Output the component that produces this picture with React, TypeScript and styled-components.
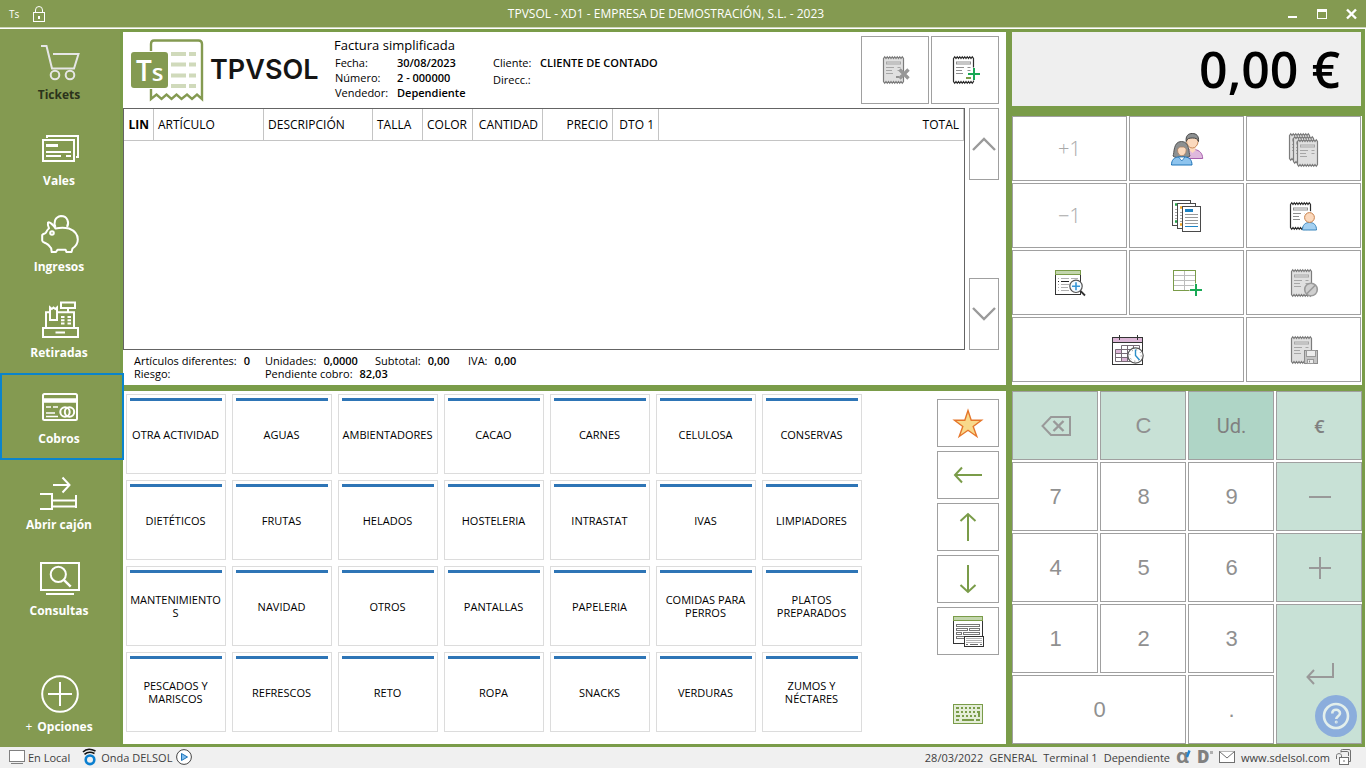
import React from "react";
import styled, { createGlobalStyle, css } from "styled-components";

const color = {
  olive: "#849a51",
  frame: "#7a9c49",
  line: "#a0a0a0",
  mint: "#c8e1d6",
  mintDark: "#afd5c6",
  blue: "#2e75b6",
  select: "#0a84cc",
};

const GlobalStyle = createGlobalStyle`
  * { box-sizing: border-box; }
  body { margin: 0; background: #f0f0f0; }
  button { font: inherit; color: inherit; margin: 0; padding: 0; cursor: pointer; }
  svg { display: block; overflow: visible; }
  dl, dd, dt, h1, p { margin: 0; font-weight: inherit; font-size: inherit; }
`;

const Shell = styled.div`
  min-height: 100vh;
  display: grid;
  grid-template-rows: 29px minmax(0, 1fr) 21px;
  font-family: "Open Sans", "Noto Sans", sans-serif;
  font-size: 11px;
  color: #000;
`;

/* ---------- title bar ---------- */

const TitleBar = styled.header`
  display: grid;
  grid-template-columns: 1fr auto 1fr;
  align-items: center;
  padding: 0 9px;
  background: ${color.olive};
  color: #fff;
  border-bottom: 1px solid #fff;
  box-shadow: inset 0 -1px 0 #ced6ba;
`;

const TitleLeft = styled.div`
  display: flex;
  align-items: center;
  gap: 12px;
`;

const TitleText = styled.span`
  padding-right: 34px;
  font-size: 12px;
  line-height: 16px;
`;

const AppBadge = styled.span`
  width: 12px;
  font-size: 10px;
  line-height: 14px;
`;

const WindowControls = styled.div`
  display: flex;
  justify-content: flex-end;
  gap: 18px;
`;

const WindowButton = styled.button`
  width: 11px;
  height: 12px;
  border: 0;
  background: none;
`;

/* ---------- sidebar ---------- */

const Body = styled.div`
  display: grid;
  grid-template-columns: 120px minmax(0, 1fr);
`;

const Sidebar = styled.nav`
  display: flex;
  flex-direction: column;
  background: ${color.olive};
`;

const NavItem = styled.button<{ $selected?: boolean; $current?: boolean; $last?: boolean }>`
  position: relative;
  display: flex;
  flex-direction: column;
  align-items: center;
  gap: 5px;
  height: 86px;
  padding-top: 13px;
  border: 0;
  background: none;
  color: ${(p) => (p.$current ? "#2b331b" : "#fff")};
  font-size: 12px;
  font-weight: 700;
  line-height: 16px;
  ${(p) => p.$last && "margin-top: auto;"}
  ${(p) =>
    p.$selected &&
    css`
      &::after {
        content: "";
        position: absolute;
        inset: 0 -4px -1px 0;
        border: 2px solid ${color.select};
      }
    `}
`;

const NavLabel = styled.span`
  padding-right: 2px;
`;

const NavPlus = styled.span`
  font-weight: 400;
  margin-right: 5px;
`;

/* ---------- workspace ---------- */

const Workspace = styled.main`
  display: grid;
  grid-template-columns: minmax(0, 1fr) 350px;
  grid-template-rows: repeat(2, minmax(353px, 1fr));
  gap: 6px;
  padding: 3px;
  background: ${color.frame};
  border-right: 1px solid #fff;
`;

const TicketPanel = styled.section`
  display: grid;
  grid-template-rows: 76px minmax(0, 1fr) 35px;
  background: #fff;
`;

const TicketHeader = styled.div`
  display: flex;
  padding: 0 7px 0 8px;
`;

const Brand = styled.div`
  display: flex;
  align-items: center;
  gap: 7px;
  width: 203px;
`;

const BrandName = styled.span`
  font-family: Inter, sans-serif;
  font-size: 27px;
  font-weight: 600;
  line-height: 32px;
  color: #151515;
`;

const TicketInfo = styled.div`
  display: grid;
  grid-template-columns: 158px auto;
  align-content: start;
  flex: 1;
  padding-top: 4px;
`;

const TicketTitle = styled.h1`
  grid-column: 1 / -1;
  font-size: 13px;
  font-weight: 500;
  line-height: 19px;
`;

const Fields = styled.dl<{ $label: number; $rowGap?: number }>`
  display: grid;
  grid-template-columns: ${(p) => p.$label}px auto;
  row-gap: ${(p) => p.$rowGap || 0}px;
  align-content: start;
  line-height: 15px;
  dt { padding-left: 1px; }
  dd { font-weight: 600; }
`;

const HeaderActions = styled.div`
  display: flex;
  gap: 2px;
  padding-top: 4px;
`;

const boxButton = css`
  display: flex;
  align-items: center;
  justify-content: center;
  border: 1px solid ${color.line};
  background: #fff;
`;

const HeaderButton = styled.button`
  ${boxButton}
  width: 68px;
  height: 68px;
`;

const LinesArea = styled.div`
  display: flex;
  gap: 4px;
  padding-right: 7px;
`;

const LinesFrame = styled.div`
  flex: 1;
  border: 1px solid #646464;
`;

const LinesTable = styled.table`
  width: 100%;
  table-layout: fixed;
  border-collapse: separate;
  border-spacing: 0;
`;

const Th = styled.th<{ $end?: boolean; $strong?: boolean; $width?: number }>`
  width: ${(p) => (p.$width ? `${p.$width}px` : "auto")};
  height: 32px;
  padding: 0 4px;
  border-right: 1px solid #c4c4c4;
  border-bottom: 1px solid #c4c4c4;
  font-size: 12px;
  font-weight: ${(p) => (p.$strong ? 700 : 400)};
  text-align: ${(p) => (p.$end ? "right" : "left")};
  white-space: nowrap;
`;

const ScrollColumn = styled.div`
  display: flex;
  flex-direction: column;
  justify-content: space-between;
`;

const ScrollButton = styled.button`
  ${boxButton}
  width: 30px;
  height: 72px;
`;

const Totals = styled.dl`
  display: grid;
  grid-template-columns: 131px 110px 93px auto;
  grid-auto-rows: 13px;
  padding: 4px 0 0 11px;
  line-height: 13px;
`;

const Total = styled.div<{ $span?: boolean }>`
  display: flex;
  gap: 7px;
  ${(p) => p.$span && "grid-column: span 2;"}
  dd { font-weight: 600; }
`;

/* ---------- families ---------- */

const CatalogPanel = styled.section`
  display: flex;
  background: #fff;
`;

const Tiles = styled.div`
  flex: 1;
  display: grid;
  grid-template-columns: repeat(auto-fill, 100px);
  grid-auto-rows: 80px;
  gap: 6px;
  padding: 3px;
`;

const Tile = styled.button`
  display: flex;
  flex-direction: column;
  border: 1px solid #dcdcdc;
  background: #fff;
  padding: 3px 2px 6px;
  line-height: 13px;
  &::before {
    content: "";
    align-self: stretch;
    height: 3px;
    margin: 0 1px;
    background: ${color.blue};
  }
`;

const TileLabel = styled.span`
  flex: 1;
  display: flex;
  align-items: center;
  justify-content: center;
  width: 93px;
  text-align: center;
  overflow-wrap: anywhere;
`;

const SideTools = styled.div`
  display: flex;
  flex-direction: column;
  align-items: center;
  gap: 4px;
  padding: 8px 7px 0 0;
`;

const ToolButton = styled.button`
  ${boxButton}
  width: 62px;
  height: 48px;
`;

const KeyboardButton = styled.button`
  margin-top: 45px;
  border: 0;
  background: none;
`;

/* ---------- right column ---------- */

const RightTop = styled.section`
  display: grid;
  grid-template-rows: 74px minmax(0, 1fr);
  row-gap: 10px;
`;

const AmountDisplay = styled.output`
  display: flex;
  align-items: center;
  justify-content: flex-end;
  margin-right: 1px;
  padding-right: 21px;
  background: #efefef;
  font-size: 50px;
  font-weight: 600;
  line-height: 74px;
`;

const Functions = styled.div`
  display: grid;
  grid-template-columns: repeat(3, minmax(0, 1fr));
  grid-template-rows: repeat(4, minmax(0, 1fr));
  gap: 2px;
  padding: 0 1px 3px 0;
  background: #fff;
`;

const FunctionButton = styled.button<{ $wide?: boolean }>`
  ${boxButton}
  grid-column: span ${(p) => (p.$wide ? 2 : 1)};
  font-size: 20px;
  font-weight: 300;
  color: #a8a8a8;
`;

const Keypad = styled.section`
  display: grid;
  grid-template-columns: repeat(4, minmax(0, 1fr));
  grid-template-rows: repeat(5, minmax(0, 1fr));
  gap: 2px;
  background: #fff;
`;

const Key = styled.button<{ $tone?: "mint" | "dark"; $wide?: boolean; $tall?: boolean }>`
  ${boxButton}
  grid-column: span ${(p) => (p.$wide ? 2 : 1)};
  grid-row: span ${(p) => (p.$tall ? 2 : 1)};
  padding-left: 1px;
  background: ${(p) => (p.$tone === "dark" ? color.mintDark : p.$tone === "mint" ? color.mint : "#fff")};
  font-family: "Liberation Sans", sans-serif;
  font-size: 22px;
  color: #909090;
`;

const KeyWord = styled.span`
  font-family: Roboto, sans-serif;
  font-size: 20px;
  color: #808080;
`;

const KeyCurrency = styled.span`
  font-family: "Open Sans", sans-serif;
  font-size: 18px;
  font-weight: 600;
  color: #808080;
`;

const HelpButton = styled.button`
  position: fixed;
  right: 9px;
  bottom: 31px;
  width: 42px;
  height: 42px;
  border: 0;
  border-radius: 50%;
  background: #8baddc;
`;

/* ---------- status bar ---------- */

const StatusBar = styled.footer`
  display: flex;
  align-items: center;
  justify-content: space-between;
  padding: 0 15px 1px 9px;
  background: #f0f0f0;
  color: #404040;
`;

const StatusGroup = styled.div<{ $gap: number }>`
  display: flex;
  align-items: center;
  gap: ${(p) => p.$gap}px;
`;

const StatusItem = styled.span<{ $gap: number }>`
  display: flex;
  align-items: center;
  gap: ${(p) => p.$gap}px;
`;

const StatusLink = styled.a`
  color: inherit;
  text-decoration: none;
`;

/* ---------- icons ---------- */

const Lock = () => (
  <svg width="12" height="16" viewBox="0 0 12 16" fill="none" stroke="#fff">
    <rect x=".5" y="6.500" width="11" height="9" />
    <path d="M2.500 6V4a3.500 3.500 0 0 1 7 0v2" />
    <path d="M6 10v3" strokeWidth="2" />
  </svg>
);

const NavSvg = ({ children, stroke = "#fff" }: { children: React.ReactNode; stroke?: string }) => (
  <svg width="40" height="40" viewBox="0 0 40 40" fill="none" stroke={stroke} strokeWidth="2">
    {children}
  </svg>
);

const CartIcon = () => (
  <NavSvg stroke="#e6e6e6">
    <path d="M1 4H6.500L12 26.500H34L38.500 12H13" />
    <circle cx="15" cy="33" r="4.300" />
    <circle cx="30" cy="33" r="4.300" />
  </NavSvg>
);

const VouchersIcon = () => (
  <NavSvg>
    <rect x="3" y="12" width="31" height="21" />
    <path d="M7 10V8H38V29H36" />
    <path d="M6 17.500H18" strokeWidth="3" />
    <path d="M6 24H31M6 28H21M26 28H31" strokeWidth="1.800" />
  </NavSvg>
);

const PiggyIcon = () => (
  <NavSvg>
    <path
      strokeLinejoin="round"
      d="M8 8.500C9.500 7.500 13 10.500 15.500 14.500C20 13.500 25 13.500 29 14.500C34 16.500 37.800 20.500 37.800 25.500C37.800 29 35.500 32.500 32.500 34.500L31.500 38H26.500L25.500 35.700H17.500L16 38H11.700L11.200 34.300C9.800 33 9 31 7 30C5 28.500 2.200 28.500 2.200 26.500V21C3 19.500 5 20 6 18.500C6.800 17 7.500 15.500 9 14.300C8 12.500 7.500 10.500 8 8.500Z"
    />
    <path d="M15.500 13C13.500 9 14.500 3 21 2C27.500 2 29.500 8.500 27 13" />
    <circle cx="12" cy="19" r="1.800" />
  </NavSvg>
);

const RegisterIcon = () => (
  <NavSvg>
    <rect x="21" y="2.500" width="14" height="5.500" />
    <path d="M28 8V12M17.500 12.300H34V27M9 12.300H6V27" />
    <rect x="3" y="28" width="35" height="9" />
    <path d="M15.500 32.500H25M10 20H17V7.500L15.300 9L13.500 7.500L11.800 9L10 7.500Z" />
    <path d="M21 17H24.500M27.500 17H31M21 20.200H24.500M27.500 20.200H31M21 23.400H24.500M27.500 23.400H31" />
  </NavSvg>
);

const CardIcon = () => (
  <NavSvg>
    <rect x="3" y="8" width="34" height="26" rx="1.500" />
    <path d="M3 14.500H37" strokeWidth="4.500" />
    <path d="M6 21H11M13 21H18M6 27H15M6 30.500H18" strokeWidth="1.600" />
    <circle cx="25" cy="26" r="4.700" />
    <circle cx="29.500" cy="26" r="4.700" />
  </NavSvg>
);

const DrawerIcon = () => (
  <NavSvg>
    <path d="M13 13H29M22.500 5.500L29.500 13L22.500 20.500" />
    <path d="M0 22H12V37H0M12 28.500H36M12 34.500H36M36 23V36" />
  </NavSvg>
);

const SearchScreenIcon = () => (
  <NavSvg>
    <rect x="1" y="5" width="38" height="27" />
    <path d="M6 36H34" />
    <circle cx="18.300" cy="16.300" r="7.600" />
    <path d="M23.800 21.800L30.700 28.700" strokeWidth="2.400" />
  </NavSvg>
);

const MoreIcon = () => (
  <NavSvg>
    <circle cx="20" cy="20" r="17.800" />
    <path d="M8 20H32M20 8V32" />
  </NavSvg>
);

const BrandLogo = () => (
  <svg width="72" height="62" viewBox="0 0 72 62" fill="none">
    <path
      d="M20 12V5Q20 1.500 23 1.500H67.500Q71 1.500 71 5V60L66 55.500L61 60L56 55.500L50.500 60L45.500 55.500L40.500 60L35.500 55.500L30.500 60L25.500 55.500L20 60V50"
      stroke={color.olive}
      strokeWidth="2.400"
    />
    <g stroke="#d0dabb" strokeWidth="4">
      <path d="M40 15H55M58 15H65M40 25.500H55M58 25.500H65M40 36.500H55M58 36.500H65M40 47H55M58 47H65" />
    </g>
    <rect x="0" y="13" width="37" height="36" rx="3" fill={color.olive} />
    <text x="5" y="42" fill="#fff" fontFamily="Open Sans, sans-serif" fontSize="28" fontWeight="600">
      T<tspan fontSize="24">s</tspan>
    </text>
  </svg>
);

const teethTop = "l1.250-1.800 1.250 1.800".repeat(8);
const teethBottom = "l-1.250 1.800-1.250-1.800".repeat(8);

const ReceiptShape = ({ x = 0, y = 0, muted }: { x?: number; y?: number; muted?: boolean }) => {
  const edge = muted ? "#7c7c7c" : "#2e2e2e";
  const detail = muted ? "#a6a6a6" : "#8f8f8f";
  return (
    <g transform={`translate(${x} ${y})`} fill="none">
      <path d={`M.5 2.500${teethTop}V25.500${teethBottom}Z`} fill={muted ? "#e0e0e0" : "#fff"} stroke={edge} strokeWidth="1.200" />
      <rect x="3.500" y="6" width="14" height="2" stroke={detail} />
      <path d="M3 11.500H11M3 14.500H9M3 17.500H10M14.500 11.500H17.500M14.500 14.500H17.500" stroke={detail} />
    </g>
  );
};

const Plus = ({ x, y }: { x: number; y: number }) => (
  <g transform={`translate(${x} ${y})`}>
    <path d="M-6.500 0H6.500M0-6.500V6.500" stroke="#fff" strokeWidth="4" />
    <path d="M-6 0H6M0-6V6" stroke="#19a955" strokeWidth="2" />
  </g>
);

const ReceiptRemove = () => (
  <svg width="30" height="28" viewBox="0 0 30 28" fill="none">
    <ReceiptShape x={3} muted />
    <path d="M16 21H19" stroke="#909090" strokeWidth="2" />
    <path d="M19.500 13.500L28.500 22.500M28.500 13.500L19.500 22.500" stroke="#979797" strokeWidth="3.400" />
  </svg>
);

const ReceiptAdd = () => (
  <svg width="30" height="28" viewBox="0 0 30 28" fill="none">
    <ReceiptShape x={3} />
    <Plus x={24} y={18} />
    <path d="M16 22H21" stroke={color.frame} strokeWidth="2" />
  </svg>
);

const ReceiptStack = () => (
  <svg width="29" height="32" viewBox="0 0 29 32">
    <ReceiptShape muted />
    <ReceiptShape x={4} y={3} muted />
    <ReceiptShape x={8} y={6} muted />
  </svg>
);

const PeopleIcon = () => (
  <svg width="32" height="32" viewBox="0 0 32 32">
    <path d="M12 25.500V22C13 18.500 16 17 19 16.500H24C28.500 17.500 31.500 20 31.700 25.500Z" fill="#dfb9dd" stroke="#a75fae" />
    <path d="M18.500 12V17.500L21.500 20L24.500 17.500V12Z" fill="#fbd9bd" />
    <ellipse cx="21.300" cy="8.500" rx="5.700" ry="6.500" fill="#fbd9bd" stroke="#c98b5a" />
    <path d="M15.200 8.500C14.500 3 17 .5 21.300.5S28 3 27.500 8.500C26.500 5.500 24.500 5 21.300 5S16 5.500 15.200 8.500Z" fill="#8d9091" stroke="#444" />
    <path d="M2 23C3.500 20 2 8.500 10.500 8.500S17.500 20 19 23C17 25.500 4 25.500 2 23Z" fill="#8d9091" stroke="#555" />
    <path d="M.5 32C.5 27 3 24.500 7 24H14.500C18.500 24.500 21 27 21 32Z" fill="#8ec4ee" stroke="#1f74b8" />
    <path d="M7.500 24L10.800 28L14 24Z" fill="#fff" stroke="#1f74b8" strokeWidth=".8" />
    <path d="M6.500 17C6.500 15.500 8 14.500 9 14H13C14.500 15 15.200 16 15.200 17C15.200 20.500 13 22.800 10.800 22.800S6.500 20.500 6.500 17Z" fill="#fbd9bd" stroke="#a97f62" strokeWidth=".8" />
  </svg>
);

const DocumentsIcon = () => (
  <svg width="29" height="32" viewBox="0 0 29 32" fill="#fff" stroke="#4a4a4a">
    <rect x=".5" y=".5" width="18" height="25" />
    <path d="M3 4.500H6M3 21.500H5" stroke="#24a148" strokeWidth="2.500" />
    <path d="M3 9.500H5M3 12.500H5M3 15.500H5M3 18.500H5" stroke="#aaa" />
    <rect x="5.500" y="3.500" width="18" height="25" />
    <path d="M8 7.500H11M8 24.500H10" stroke="#f5a623" strokeWidth="2.500" />
    <path d="M8 12.500H10M8 15.500H10M8 18.500H10M8 21.500H10" stroke="#aaa" />
    <rect x="10.500" y="6.500" width="18" height="25" />
    <path d="M13 10.500H21" stroke="#1d83c4" strokeWidth="3" />
    <path d="M13 14.500H26M13 17.500H26M13 20.500H26M13 23.500H26" stroke="#9a9a9a" />
    <path d="M13 26.500H26" stroke="#1d83c4" />
  </svg>
);

const ReceiptPerson = () => (
  <svg width="27" height="28" viewBox="0 0 27 28">
    <ReceiptShape />
    <circle cx="19.500" cy="15.500" r="6.500" fill="#fff" />
    <path d="M12.500 28C12.500 23 15 20.500 19.500 20.500S26.500 23 26.500 28Z" fill="#a4d0f1" stroke="#3d87bd" />
    <circle cx="19.500" cy="15.500" r="4.900" fill="#fbd9bd" stroke="#c9824d" />
  </svg>
);

const ListSearch = () => (
  <svg width="30" height="26" viewBox="0 0 30 26" fill="none">
    <rect x=".5" y="2.500" width="25" height="22" fill="#fff" stroke="#333" />
    <rect x=".5" y=".5" width="25" height="4" fill="#c3d6ad" stroke={color.frame} />
    <path d="M3 8.500H4M6 8.500H14M16 8.500H23M3 14.500H4M6 14.500H14M3 17.500H4M6 17.500H13M3 20.500H4M6 20.500H14" stroke="#b0b0b0" />
    <path d="M3 11.500H4M6 11.500H14" stroke="#222" />
    <circle cx="21" cy="16.300" r="6.200" fill="#f5faff" stroke="#555" strokeWidth="1.200" />
    <path d="M25.500 21L30 25.500" stroke="#333" strokeWidth="1.800" />
    <path d="M17 16.300H25M21 12.300V20.300" stroke="#3595d6" strokeWidth="1.600" />
  </svg>
);

const TableAdd = () => (
  <svg width="27" height="25" viewBox="0 0 27 25" fill="none">
    <rect x=".5" y=".5" width="22" height="20" fill="#fff" stroke={color.frame} />
    <path d="M1 5.500H22M1 10.500H22M1 15.500H22M11.500 1V20" stroke="#bdbdbd" />
    <Plus x={23} y={20} />
  </svg>
);

const ReceiptBlocked = () => (
  <svg width="25" height="28" viewBox="0 0 25 28">
    <ReceiptShape muted />
    <circle cx="20" cy="20.500" r="6.300" fill="#cfcfcf" stroke="#9a9a9a" strokeWidth="1.600" />
    <path d="M15.800 24.700L24.200 16.300" stroke="#9a9a9a" strokeWidth="1.600" />
  </svg>
);

const ReceiptSave = () => (
  <svg width="25" height="28" viewBox="0 0 25 28">
    <ReceiptShape muted />
    <rect x="13.500" y="14.500" width="13" height="13" fill="#c4c4c4" stroke="#8c8c8c" />
    <rect x="15.500" y="14.500" width="9" height="6" fill="#ececec" stroke="#9a9a9a" />
    <rect x="16.500" y="23.500" width="6" height="4" fill="#ececec" stroke="#9a9a9a" />
    <path d="M18.500 24.500V26.500" stroke="#8c8c8c" />
  </svg>
);

const CalendarClock = () => (
  <svg width="32" height="30" viewBox="0 0 32 30" fill="none">
    <rect x=".5" y="2.500" width="30" height="27" fill="#fff" stroke="#333" />
    <rect x=".5" y="2.500" width="30" height="5" fill="#dcb6d6" stroke="#333" />
    <path d="M7.500 0V5M25.500 0V5" stroke="#333" />
    <path d="M3 14.500H9V18.500H3ZM9 22.500H15V26.500H9Z" fill="#dcb6d6" />
    <path d="M9.500 10.500H27.500V26.500H3.500V14.500H27.500M3.500 18.500H27.500M3.500 22.500H27.500M9.500 10.500V26.500M15.500 10.500V26.500M21.500 10.500V26.500" stroke="#776b76" />
    <circle cx="23.500" cy="20.500" r="7.700" fill="#fff" stroke="#555" strokeWidth="1.200" />
    <circle cx="23.500" cy="20.500" r="5.700" stroke="#777" strokeDasharray="1 3.480" />
    <path d="M23.500 14.500V20.500L27.500 25" stroke="#2b8fc9" strokeWidth="1.400" />
  </svg>
);

const StarIcon = () => (
  <svg width="30" height="29" viewBox="0 0 30 29">
    <path d="M15 1.500L18.200 11.300H28.500L20.200 17.400L23.800 27.500L15 21.300L6.200 27.500L9.800 17.400L1.500 11.300H11.800Z" fill="#f8d98b" stroke="#e5762b" strokeWidth="1.400" />
  </svg>
);

const Arrow = ({ turn }: { turn: number }) => (
  <svg width="28" height="28" viewBox="0 0 28 28" fill="none" stroke={color.frame} strokeWidth="2">
    <path transform={`rotate(${turn} 14 14)`} d="M28 14H1M8 6.500L1 14L8 21.500" />
  </svg>
);

const FormIcon = () => (
  <svg width="31" height="31" viewBox="0 0 31 31" fill="none">
    <rect x=".5" y="2.500" width="29" height="25" fill="#fff" stroke="#333" />
    <rect x=".5" y=".5" width="29" height="4" fill="#c3d6ad" stroke={color.frame} />
    <g stroke="#777">
      <rect x="3.500" y="8.500" width="23" height="2" />
      <rect x="3.500" y="12.500" width="11" height="2" />
      <rect x="16.500" y="12.500" width="10" height="2" />
      <rect x="3.500" y="16.500" width="5" height="2" />
      <rect x="10.500" y="16.500" width="16" height="2" />
      <rect x="3.500" y="20.500" width="8" height="2" />
    </g>
    <rect x="11.500" y="20.500" width="19" height="10" fill="#fff" stroke="#333" />
    <path d="M13.500 22.500H29M13.500 24.500H29M13.500 26.500H29" stroke="#666" strokeDasharray="1 1" />
    <path d="M13 28.500H15M17 28.500H25M27 28.500H29" stroke="#666" />
  </svg>
);

const KeyboardIcon = () => (
  <svg width="30" height="20" viewBox="0 0 30 20" fill="none" stroke={color.frame}>
    <rect x=".5" y=".5" width="29" height="19" fill="#e4edd8" />
    <g strokeWidth="2">
      <path d="M3 4H6M8 4H10M12 4H14M16 4H18M20 4H22M24 4H27" />
      <path d="M3 8H6M8 8H10M12 8H14M16 8H18M20 8H22M24 8H27M26 8V12" />
      <path d="M3 12H7M9 12H11M13 12H15M17 12H19M21 12H23M25 12H27" />
      <path d="M3 16H6M9 16H21M23 16H27" />
    </g>
  </svg>
);

const Chevron = ({ down }: { down?: boolean }) => (
  <svg width="24" height="14" viewBox="0 0 24 14" fill="none" stroke="#9a9a9a" strokeWidth="2.400">
    <path d={down ? "M1 1L12 12L23 1" : "M1 13L12 2L23 13"} />
  </svg>
);

const BackspaceIcon = () => (
  <svg width="30" height="20" viewBox="0 0 30 20" fill="none" stroke="#999" strokeWidth="2">
    <path d="M10 1H29V19H10L1.500 10Z" />
    <path d="M12.500 5L22.500 15M22.500 5L12.500 15" strokeWidth="2.400" />
  </svg>
);

const SignIcon = ({ plus }: { plus?: boolean }) => (
  <svg width="22" height="22" viewBox="0 0 22 22" stroke="#999" strokeWidth="2">
    <path d={plus ? "M0 11H22M11 0V22" : "M0 11H22"} />
  </svg>
);

const EnterIcon = () => (
  <svg width="28" height="22" viewBox="0 0 28 22" fill="none" stroke="#999" strokeWidth="2">
    <path d="M27 0V14H1.500M8 7L1.500 14L8 21" />
  </svg>
);

const HelpIcon = () => (
  <svg width="42" height="42" viewBox="0 0 42 42" fill="none" stroke="#e3efec" strokeWidth="2.600">
    <circle cx="21" cy="21" r="12" />
    <path d="M17.300 18.500C17.300 13.500 25 13.700 25 18.200C25 21 21.200 21.300 21.200 24" />
    <circle cx="21.200" cy="27" r=".5" strokeWidth="2" />
  </svg>
);

const MonitorIcon = () => (
  <svg width="16" height="14" viewBox="0 0 16 14" fill="none" stroke="#808080">
    <rect x=".5" y=".5" width="15" height="11" fill="#fff" />
    <path d="M2 13.500H14" />
  </svg>
);

const WaveIcon = () => (
  <svg width="15" height="16" viewBox="0 0 15 16" fill="none">
    <circle cx="8" cy="10.800" r="4.300" stroke="#0b7fd0" strokeWidth="2.600" />
    <path d="M1 3C4-.3 9-.3 13.500 2M2.500 5.300C5.500 2.800 9.500 3 12.500 4.500" stroke="#111" strokeWidth="1.600" />
  </svg>
);

const PlayIcon = () => (
  <svg width="16" height="16" viewBox="0 0 16 16">
    <circle cx="8" cy="8" r="7.400" fill="#fff" stroke="#444" />
    <path d="M5.500 4.500L11.500 8L5.500 11.500Z" fill="#7fbdf0" stroke="#1d74b8" />
  </svg>
);

const AlphaIcon = () => (
  <svg width="15" height="15" viewBox="0 0 15 15">
    <text x="0" y="13" fill="#808080" fontFamily="Open Sans, sans-serif" fontSize="20" fontWeight="700">
      α
    </text>
    <path d="M11 7L13.500.5" stroke="#2185d0" strokeWidth="2.400" />
  </svg>
);

const DIcon = () => (
  <svg width="16" height="14" viewBox="0 0 16 14">
    <text x="0" y="13" fill="#808080" fontFamily="Open Sans, sans-serif" fontSize="17" fontWeight="800">
      D
    </text>
    <rect x="13" y="1" width="3" height="3" fill="#b0b0b0" />
  </svg>
);

const MailIcon = () => (
  <svg width="16" height="12" viewBox="0 0 16 12" fill="#fff" stroke="#707070">
    <rect x=".5" y=".5" width="15" height="11" />
    <path d="M.5.5L8 7L15.500.5" />
  </svg>
);

const UnlockIcon = () => (
  <svg width="15" height="16" viewBox="0 0 15 16" fill="none" stroke="#707070">
    <path d="M5 3.500V1.500Q5 .5 6.500.5H13Q14.500.5 14.500 2V12.500H12.500M5 2.500H11.500Q12.500 2.500 12.500 4V7" />
    <path d="M.5 10V6.500C.5 4 5.500 4 5.500 6.500V8" />
    <rect x="3.500" y="8.500" width="9" height="7" fill="#fff" />
    <path d="M8 11V13" />
  </svg>
);

/* ---------- data ---------- */

const navItems = [
  { label: "Tickets", icon: <CartIcon />, current: true },
  { label: "Vales", icon: <VouchersIcon /> },
  { label: "Ingresos", icon: <PiggyIcon /> },
  { label: "Retiradas", icon: <RegisterIcon /> },
  { label: "Cobros", icon: <CardIcon />, selected: true },
  { label: "Abrir cajón", icon: <DrawerIcon /> },
  { label: "Consultas", icon: <SearchScreenIcon /> },
];

const columns = [
  { label: "LIN", width: 30, strong: true, end: true },
  { label: "ARTÍCULO", width: 110 },
  { label: "DESCRIPCIÓN", width: 109 },
  { label: "TALLA", width: 50 },
  { label: "COLOR", width: 50 },
  { label: "CANTIDAD", width: 70, end: true },
  { label: "PRECIO", width: 70, end: true },
  { label: "DTO 1", width: 46, end: true },
  { label: "TOTAL", end: true },
];

const families = [
  "OTRA ACTIVIDAD", "AGUAS", "AMBIENTADORES", "CACAO", "CARNES", "CELULOSA", "CONSERVAS",
  "DIETÉTICOS", "FRUTAS", "HELADOS", "HOSTELERIA", "INTRASTAT", "IVAS", "LIMPIADORES",
  "MANTENIMIENTOS", "NAVIDAD", "OTROS", "PANTALLAS", "PAPELERIA", "COMIDAS PARA PERROS", "PLATOS PREPARADOS",
  "PESCADOS Y MARISCOS", "REFRESCOS", "RETO", "ROPA", "SNACKS", "VERDURAS", "ZUMOS Y NÉCTARES",
];

/* ---------- page ---------- */

export default function App() {
  return (
    <Shell>
      <GlobalStyle />
      <TitleBar>
        <TitleLeft>
          <AppBadge>Ts</AppBadge>
          <Lock />
        </TitleLeft>
        <TitleText>TPVSOL - XD1 - EMPRESA DE DEMOSTRACIÓN, S.L. - 2023</TitleText>
        <WindowControls>
          <WindowButton aria-label="Minimizar">
            <svg width="11" height="12" stroke="#fff" strokeWidth="2"><path d="M0 9H9" /></svg>
          </WindowButton>
          <WindowButton aria-label="Maximizar">
            <svg width="11" height="12" stroke="#fff" fill="none">
              <rect x=".5" y="1.500" width="9" height="9" />
              <path d="M0 2.500H10" strokeWidth="3" />
            </svg>
          </WindowButton>
          <WindowButton aria-label="Cerrar">
            <svg width="11" height="12" stroke="#fff" strokeWidth="2.400"><path d="M1 1.500L10 10.500M10 1.500L1 10.500" /></svg>
          </WindowButton>
        </WindowControls>
      </TitleBar>

      <Body>
        <Sidebar>
          {navItems.map((item) => (
            <NavItem key={item.label} $selected={item.selected} $current={item.current}>
              {item.icon}
              <NavLabel>{item.label}</NavLabel>
            </NavItem>
          ))}
          <NavItem $last>
            <MoreIcon />
            <NavLabel>
              <NavPlus>+</NavPlus>
              Opciones
            </NavLabel>
          </NavItem>
        </Sidebar>

        <Workspace>
          <TicketPanel>
            <TicketHeader>
              <Brand>
                <BrandLogo />
                <BrandName>TPVSOL</BrandName>
              </Brand>
              <TicketInfo>
                <TicketTitle>Factura simplificada</TicketTitle>
                <Fields $label={63}>
                  <dt>Fecha:</dt>
                  <dd>30/08/2023</dd>
                  <dt>Número:</dt>
                  <dd>2 - 000000</dd>
                  <dt>Vendedor:</dt>
                  <dd>Dependiente</dd>
                </Fields>
                <Fields $label={48} $rowGap={2}>
                  <dt>Cliente:</dt>
                  <dd>CLIENTE DE CONTADO</dd>
                  <dt>Direcc.:</dt>
                  <dd />
                </Fields>
              </TicketInfo>
              <HeaderActions>
                <HeaderButton aria-label="Eliminar ticket"><ReceiptRemove /></HeaderButton>
                <HeaderButton aria-label="Nuevo ticket"><ReceiptAdd /></HeaderButton>
              </HeaderActions>
            </TicketHeader>

            <LinesArea>
              <LinesFrame>
                <LinesTable>
                  <thead>
                    <tr>
                      {columns.map((c) => (
                        <Th key={c.label} $width={c.width} $end={c.end} $strong={c.strong}>{c.label}</Th>
                      ))}
                    </tr>
                  </thead>
                  <tbody />
                </LinesTable>
              </LinesFrame>
              <ScrollColumn>
                <ScrollButton aria-label="Subir"><Chevron /></ScrollButton>
                <ScrollButton aria-label="Bajar"><Chevron down /></ScrollButton>
              </ScrollColumn>
            </LinesArea>

            <Totals>
              <Total><dt>Artículos diferentes:</dt><dd>0</dd></Total>
              <Total><dt>Unidades:</dt><dd>0,0000</dd></Total>
              <Total><dt>Subtotal:</dt><dd>0,00</dd></Total>
              <Total><dt>IVA:</dt><dd>0,00</dd></Total>
              <Total><dt>Riesgo:</dt><dd /></Total>
              <Total $span><dt>Pendiente cobro:</dt><dd>82,03</dd></Total>
            </Totals>
          </TicketPanel>

          <RightTop>
            <AmountDisplay>0,00 €</AmountDisplay>
            <Functions>
              <FunctionButton>+1</FunctionButton>
              <FunctionButton aria-label="Clientes"><PeopleIcon /></FunctionButton>
              <FunctionButton aria-label="Tickets aparcados"><ReceiptStack /></FunctionButton>
              <FunctionButton>−1</FunctionButton>
              <FunctionButton aria-label="Documentos"><DocumentsIcon /></FunctionButton>
              <FunctionButton aria-label="Ticket de cliente"><ReceiptPerson /></FunctionButton>
              <FunctionButton aria-label="Buscar artículo"><ListSearch /></FunctionButton>
              <FunctionButton aria-label="Añadir línea"><TableAdd /></FunctionButton>
              <FunctionButton aria-label="Anular ticket"><ReceiptBlocked /></FunctionButton>
              <FunctionButton $wide aria-label="Agenda"><CalendarClock /></FunctionButton>
              <FunctionButton aria-label="Guardar ticket"><ReceiptSave /></FunctionButton>
            </Functions>
          </RightTop>

          <CatalogPanel>
            <Tiles>
              {families.map((f) => (
                <Tile key={f}><TileLabel>{f}</TileLabel></Tile>
              ))}
            </Tiles>
            <SideTools>
              <ToolButton aria-label="Favoritos"><StarIcon /></ToolButton>
              <ToolButton aria-label="Volver"><Arrow turn={0} /></ToolButton>
              <ToolButton aria-label="Página anterior"><Arrow turn={90} /></ToolButton>
              <ToolButton aria-label="Página siguiente"><Arrow turn={-90} /></ToolButton>
              <ToolButton aria-label="Formulario"><FormIcon /></ToolButton>
              <KeyboardButton aria-label="Teclado"><KeyboardIcon /></KeyboardButton>
            </SideTools>
          </CatalogPanel>

          <Keypad>
            <Key $tone="mint" aria-label="Borrar"><BackspaceIcon /></Key>
            <Key $tone="mint">C</Key>
            <Key $tone="dark"><KeyWord>Ud.</KeyWord></Key>
            <Key $tone="mint"><KeyCurrency>€</KeyCurrency></Key>
            <Key>7</Key>
            <Key>8</Key>
            <Key>9</Key>
            <Key $tone="mint" aria-label="Menos"><SignIcon /></Key>
            <Key>4</Key>
            <Key>5</Key>
            <Key>6</Key>
            <Key $tone="mint" aria-label="Más"><SignIcon plus /></Key>
            <Key>1</Key>
            <Key>2</Key>
            <Key>3</Key>
            <Key $tone="mint" $tall aria-label="Intro"><EnterIcon /></Key>
            <Key $wide>0</Key>
            <Key>.</Key>
          </Keypad>
        </Workspace>
      </Body>

      <StatusBar>
        <StatusGroup $gap={12}>
          <StatusItem $gap={3}><MonitorIcon />En Local</StatusItem>
          <StatusItem $gap={4}><WaveIcon />Onda DELSOL<PlayIcon /></StatusItem>
        </StatusGroup>
        <StatusGroup $gap={6}>
          <span>28/03/2022</span>
          <span>GENERAL</span>
          <span>Terminal 1</span>
          <span>Dependiente</span>
          <AlphaIcon />
          <DIcon />
          <MailIcon />
          <StatusLink href="#">www.sdelsol.com</StatusLink>
          <UnlockIcon />
        </StatusGroup>
      </StatusBar>

      <HelpButton aria-label="Ayuda"><HelpIcon /></HelpButton>
    </Shell>
  );
}
